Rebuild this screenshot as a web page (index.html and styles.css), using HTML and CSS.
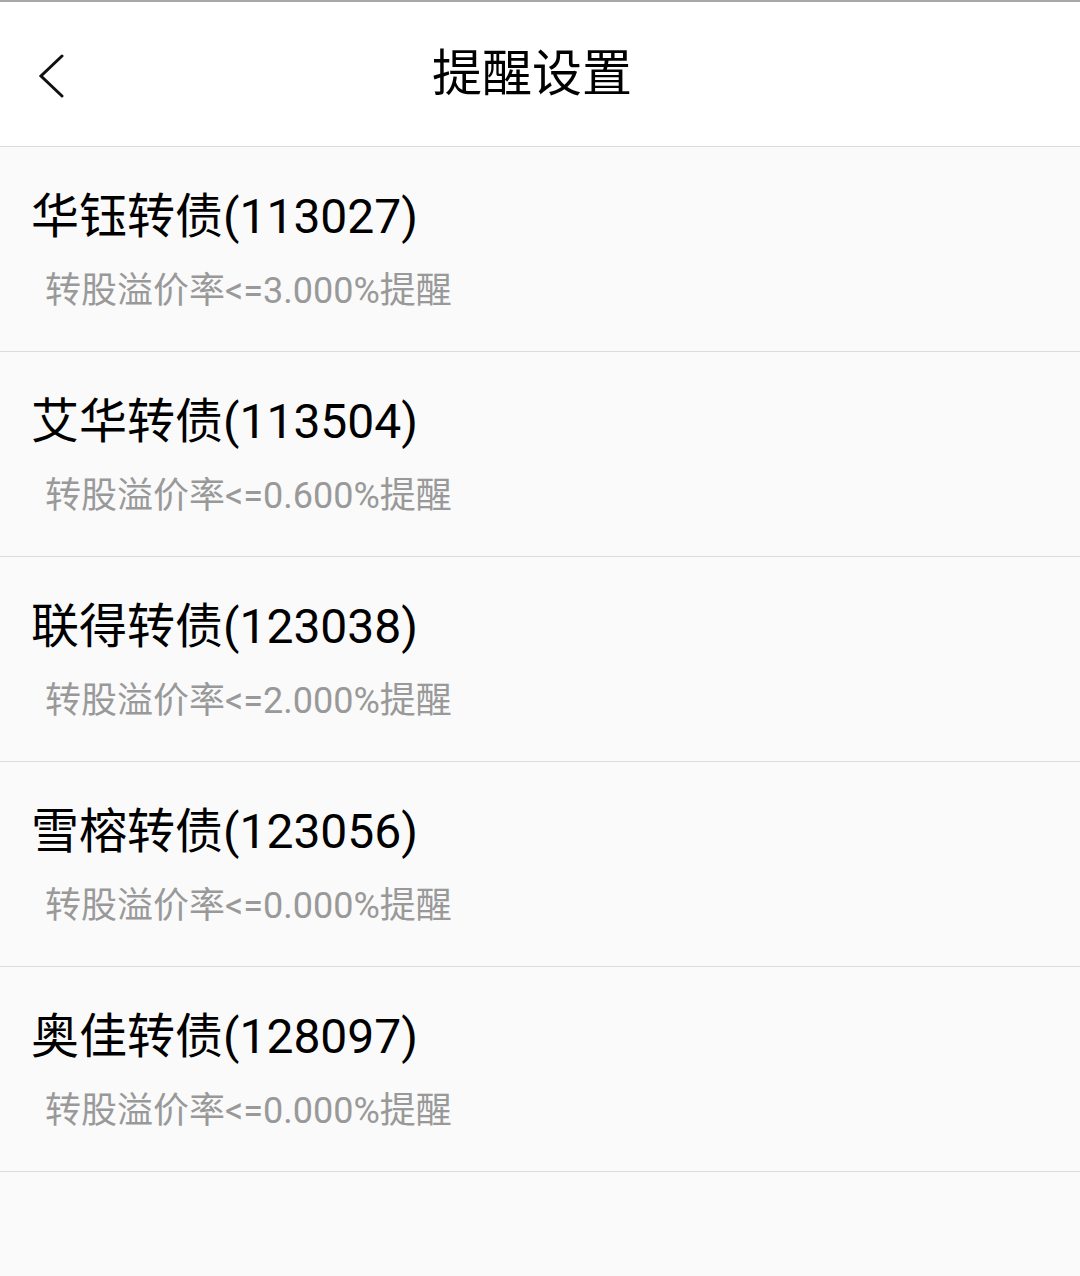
FILE: index.html
```html
<!DOCTYPE html>
<html lang="zh-CN">
<head>
<meta charset="utf-8">
<title>提醒设置</title>
<link rel="stylesheet" href="styles.css">
</head>
<body>
<div class="page">
  <header class="topbar">
    <a class="back" aria-label="返回">
      <svg width="30" height="46" viewBox="0 0 30 46"><path d="M24 4 L3 24 L24 44" fill="none" stroke="#111" stroke-width="3" stroke-linecap="round" stroke-linejoin="miter"/></svg>
    </a>
    <h1 class="title">提醒设置</h1>
  </header>
  <ul class="list">
    <li class="item"><div class="name">华钰转债(113027)</div><div class="desc">转股溢价率&lt;=3.000%提醒</div></li>
    <li class="item"><div class="name">艾华转债(113504)</div><div class="desc">转股溢价率&lt;=0.600%提醒</div></li>
    <li class="item"><div class="name">联得转债(123038)</div><div class="desc">转股溢价率&lt;=2.000%提醒</div></li>
    <li class="item"><div class="name">雪榕转债(123056)</div><div class="desc">转股溢价率&lt;=0.000%提醒</div></li>
    <li class="item"><div class="name">奥佳转债(128097)</div><div class="desc">转股溢价率&lt;=0.000%提醒</div></li>
  </ul>
</div>
</body>
</html>
```

FILE: styles.css
```css
html, body {
  margin: 0;
  padding: 0;
  background: #fafafa;
  font-family: Roboto, "Noto Sans CJK SC", sans-serif;
}
.page {
  width: 1080px;
  min-height: 1276px;
  background: #fafafa;
  border-top: 2px solid #a8a8a8;
  box-sizing: border-box;
}
.topbar {
  height: 144px;
  background: #fff;
  border-bottom: 1px solid #dcdcdc;
  display: flex;
  align-items: center;
  justify-content: center;
  position: relative;
}
.back {
  position: absolute;
  left: 38px;
  top: 50px;
  display: block;
  width: 30px;
  height: 46px;
}
.back svg { display: block; }
.title {
  margin: 0;
  font-size: 50px;
  font-weight: 400;
  color: #000;
  line-height: 58px;
  padding-right: 16px;
}
.list {
  list-style: none;
  margin: 0;
  padding: 0;
}
.item {
  height: 204px;
  border-bottom: 1px solid #dcdcdc;
  box-sizing: content-box;
  padding: 0 0 0 31px;
  display: flex;
  flex-direction: column;
}
.name {
  margin-top: 42px;
  font-size: 48px;
  line-height: 56px;
  color: #000;
}
.desc {
  margin-top: 24px;
  margin-left: 14px;
  font-size: 36px;
  line-height: 44px;
  color: #999;
}
```
